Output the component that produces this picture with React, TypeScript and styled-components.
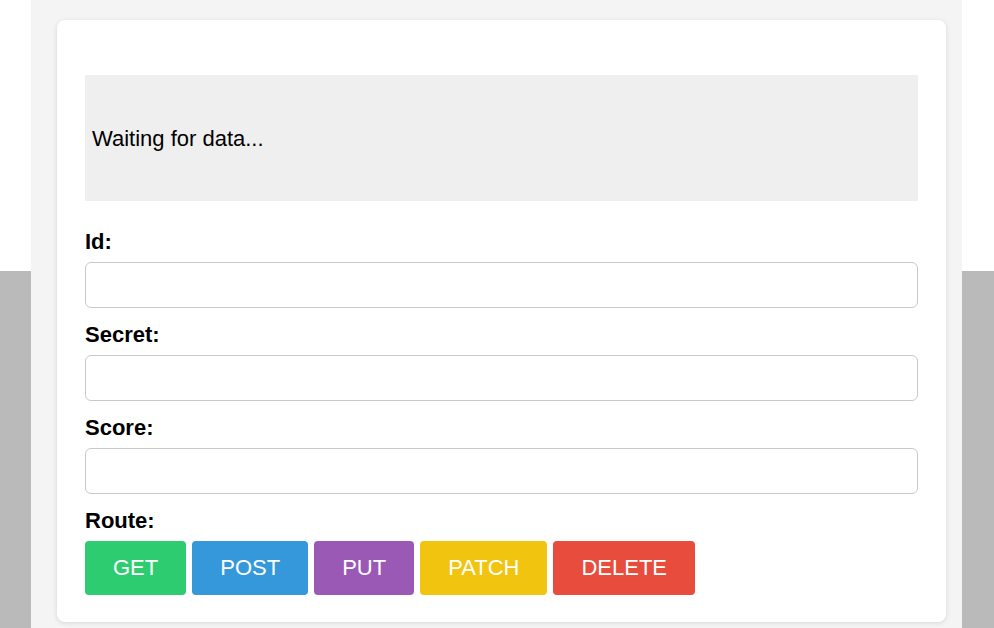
import React from "react";
import styled, { createGlobalStyle } from "styled-components";

const Global = createGlobalStyle`
  html, body { margin: 0; padding: 0; }
  body {
    background: linear-gradient(to bottom, #ffffff 0, #ffffff 271px, #bababa 271px, #bababa 100%);
    min-height: 628px;
    font-family: "Liberation Sans", Arial, sans-serif;
    color: #000;
  }
`;

const Column = styled.div`
  width: 931px;
  box-sizing: border-box;
  margin: 0 0 0 31px;
  min-height: 628px;
  background: #f4f4f4;
  padding: 20px 16px 0 26px;
`;

const Card = styled.div`
  background: #ffffff;
  border-radius: 8px;
  box-shadow: 0 1px 5px rgba(0, 0, 0, 0.12);
  padding: 55px 28px 27px 28px;
  display: flex;
  flex-direction: column;
`;

const Output = styled.div`
  height: 126px;
  background: #efefef;
  display: flex;
  align-items: center;
  padding: 2px 7px 0 7px;
  box-sizing: border-box;
  font-size: 22px;
  margin-bottom: 14px;
`;

const Field = styled.div`
  display: flex;
  flex-direction: column;
  gap: 8px;
  margin-top: 14px;
`;

const Label = styled.label`
  font-size: 22px;
  font-weight: bold;
  line-height: 25px;
`;

const Input = styled.input`
  height: 46px;
  box-sizing: border-box;
  border: 1px solid #c9c9c9;
  border-radius: 6px;
  font-size: 20px;
  padding: 0 10px;
  font-family: inherit;
`;

const Buttons = styled.div`
  display: flex;
  gap: 6px;
`;

const RouteButton = styled.button<{ $bg: string }>`
  background: ${(p) => p.$bg};
  color: #ffffff;
  border: none;
  border-radius: 4px;
  padding: 14px 28px;
  font-family: "Liberation Sans", Arial, sans-serif;
  font-size: 22px;
  line-height: 26px;
  cursor: pointer;
`;

const routes = [
  { name: "GET", color: "#2ecc71" },
  { name: "POST", color: "#3498db" },
  { name: "PUT", color: "#9b59b6" },
  { name: "PATCH", color: "#f1c40f" },
  { name: "DELETE", color: "#e74c3c" },
];

export default function App() {
  return (
    <>
      <Global />
      <Column>
        <Card>
          <Output>Waiting for data...</Output>
          {["Id", "Secret", "Score"].map((f) => (
            <Field key={f}>
              <Label>{f}:</Label>
              <Input type="text" />
            </Field>
          ))}
          <Field>
            <Label>Route:</Label>
            <Buttons>
              {routes.map((r) => (
                <RouteButton key={r.name} $bg={r.color}>
                  {r.name}
                </RouteButton>
              ))}
            </Buttons>
          </Field>
        </Card>
      </Column>
    </>
  );
}
